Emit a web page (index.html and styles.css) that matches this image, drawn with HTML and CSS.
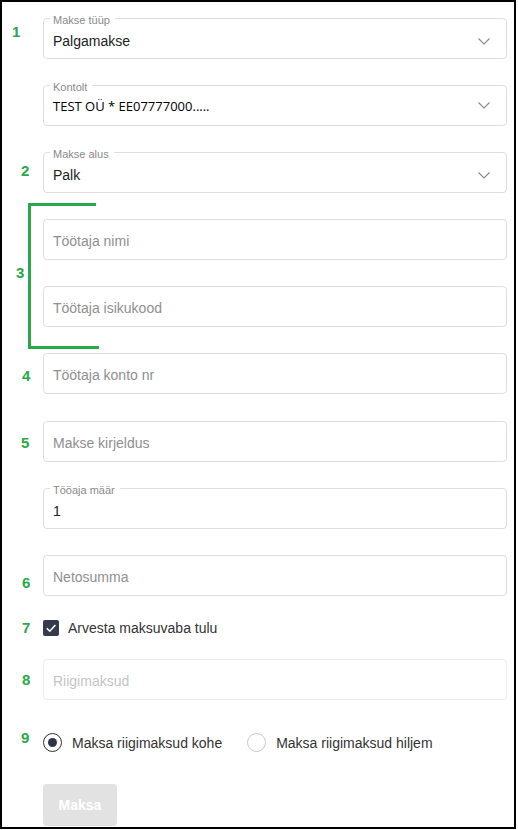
FILE: index.html
```html
<!DOCTYPE html>
<html lang="et">
<head>
<meta charset="utf-8">
<title>Palgamakse</title>
<link rel="stylesheet" href="styles.css">
</head>
<body>
<div class="frame">
  <form class="form">
    <div class="field field--labeled">
      <span class="field__label">Makse tüüp</span>
      <span class="field__value">Palgamakse</span>
      <svg class="chevron" viewBox="0 0 12 7"><polyline points="0.5,0.5 6,6 11.5,0.5"/></svg>
    </div>
    <div class="field field--labeled field--account">
      <span class="field__label">Kontolt</span>
      <span class="field__value field__value--account">TEST OÜ * EE07777000.....</span>
      <svg class="chevron" viewBox="0 0 12 7"><polyline points="0.5,0.5 6,6 11.5,0.5"/></svg>
    </div>
    <div class="field field--labeled">
      <span class="field__label">Makse alus</span>
      <span class="field__value">Palk</span>
      <svg class="chevron" viewBox="0 0 12 7"><polyline points="0.5,0.5 6,6 11.5,0.5"/></svg>
    </div>
    <div class="field">
      <span class="field__placeholder">Töötaja nimi</span>
    </div>
    <div class="field">
      <span class="field__placeholder">Töötaja isikukood</span>
    </div>
    <div class="field">
      <span class="field__placeholder">Töötaja konto nr</span>
    </div>
    <div class="field field--shift">
      <span class="field__placeholder">Makse kirjeldus</span>
    </div>
    <div class="field field--labeled">
      <span class="field__label">Tööaja määr</span>
      <span class="field__value">1</span>
    </div>
    <div class="field">
      <span class="field__placeholder">Netosumma</span>
    </div>

    <label class="check">
      <span class="check__box">
        <svg class="check__mark" viewBox="0 0 16 16"><polyline points="3.8,8.2 6.8,11.2 12.4,5"/></svg>
      </span>
      <span class="check__text">Arvesta maksuvaba tulu</span>
    </label>

    <div class="field field--disabled">
      <span class="field__placeholder">Riigimaksud</span>
    </div>

    <div class="radios">
      <label class="radio">
        <span class="radio__circle radio__circle--on"><span class="radio__dot"></span></span>
        <span class="radio__text">Maksa riigimaksud kohe</span>
      </label>
      <label class="radio">
        <span class="radio__circle"></span>
        <span class="radio__text">Maksa riigimaksud hiljem</span>
      </label>
    </div>

    <button type="button" class="btn">Maksa</button>
  </form>

  <div class="annot">
    <span class="annot__num annot__num--1">1</span>
    <span class="annot__num annot__num--2">2</span>
    <span class="annot__num annot__num--3">3</span>
    <span class="annot__num annot__num--4">4</span>
    <span class="annot__num annot__num--5">5</span>
    <span class="annot__num annot__num--6">6</span>
    <span class="annot__num annot__num--7">7</span>
    <span class="annot__num annot__num--8">8</span>
    <span class="annot__num annot__num--9">9</span>
    <span class="bracket bracket--v"></span>
    <span class="bracket bracket--top"></span>
    <span class="bracket bracket--bottom"></span>
  </div>
</div>
</body>
</html>
```

FILE: styles.css
```css
html, body {
  margin: 0;
  padding: 0;
  background: #fff;
}

.frame {
  position: relative;
  box-sizing: border-box;
  width: 516px;
  height: 829px;
  border: 2px solid #000;
  padding: 16px 7px 0 41px;
  font-family: "Liberation Sans", Arial, sans-serif;
}

.form {
  display: flex;
  flex-direction: column;
  margin: 0;
}

.field {
  position: relative;
  display: flex;
  align-items: center;
  box-sizing: border-box;
  height: 41px;
  border: 1px solid #dedede;
  border-radius: 4px;
  padding: 2px 16px 0 9px;
  font-size: 14px;
  line-height: 16px;
}

.field + .field {
  margin-top: 26px;
}

.field--shift {
  margin-top: 27px !important;
}

.field--labeled {
  padding-top: 5px;
}

.field--account {
  padding-top: 0;
}

.field__label {
  position: absolute;
  left: 6px;
  top: -4px;
  padding: 0 5px 0 3px;
  background: #fff;
  font-size: 11px;
  line-height: 11px;
  color: #8a8a8a;
}

.field__value {
  flex: 1;
  color: #222;
}

.field__value--account {
  font-family: "Open Sans", sans-serif;
  font-size: 13px;
  color: #000;
}

.field__placeholder {
  flex: 1;
  color: #8f8f8f;
}

.field--disabled {
  border-color: #ececec;
  margin-top: 23px;
}

.field--disabled .field__placeholder {
  color: #c4c4c4;
}

.chevron {
  flex: none;
  width: 12px;
  height: 7px;
  fill: none;
  stroke: #8a8a8a;
  stroke-width: 1.1;
}

.check {
  display: flex;
  align-items: center;
  gap: 9px;
  height: 16px;
  margin-top: 24px;
}

.check__box {
  flex: none;
  width: 16px;
  height: 16px;
  border-radius: 2px;
  background: #353a4e;
}

.check__mark {
  display: block;
  width: 16px;
  height: 16px;
  fill: none;
  stroke: #fff;
  stroke-width: 1.6;
}

.check__text {
  font-size: 14px;
  color: #333;
}

.radios {
  display: flex;
  align-items: center;
  gap: 25px;
  height: 19px;
  margin-top: 33px;
}

.radio {
  display: flex;
  align-items: center;
  gap: 10px;
}

.radio__circle {
  flex: none;
  box-sizing: border-box;
  width: 19px;
  height: 19px;
  border: 1px solid #c9c9c9;
  border-radius: 50%;
  display: flex;
  align-items: center;
  justify-content: center;
}

.radio__circle--on {
  border: 1.5px solid #333;
}

.radio__dot {
  width: 9px;
  height: 9px;
  border-radius: 50%;
  background: #2e3345;
}

.radio__text {
  font-size: 14px;
  color: #333;
}

.btn {
  align-self: flex-start;
  margin-top: 32px;
  width: 74px;
  height: 42px;
  border: none;
  border-radius: 4px;
  background: #e2e2e2;
  color: #fff;
  font-family: "Liberation Sans", Arial, sans-serif;
  font-weight: 700;
  font-size: 14px;
  padding: 0;
}

/* annotation overlay */
.annot__num {
  position: absolute;
  font-family: "Liberation Sans", Arial, sans-serif;
  font-weight: 700;
  font-size: 15px;
  line-height: 14px;
  color: #2aa84a;
}

.annot__num--1 { left: 10px; top: 23px; }
.annot__num--2 { left: 19px; top: 162px; }
.annot__num--3 { left: 14px; top: 264px; }
.annot__num--4 { left: 20px; top: 367px; }
.annot__num--5 { left: 19px; top: 434px; }
.annot__num--6 { left: 20px; top: 574px; }
.annot__num--7 { left: 20px; top: 619px; }
.annot__num--8 { left: 20px; top: 671px; }
.annot__num--9 { left: 19px; top: 729px; }

.bracket {
  position: absolute;
  background: #2aa84a;
}

.bracket--v { left: 26px; top: 201px; width: 3px; height: 146px; }
.bracket--top { left: 26px; top: 201px; width: 68px; height: 3px; }
.bracket--bottom { left: 26px; top: 344px; width: 71px; height: 3px; }
```
